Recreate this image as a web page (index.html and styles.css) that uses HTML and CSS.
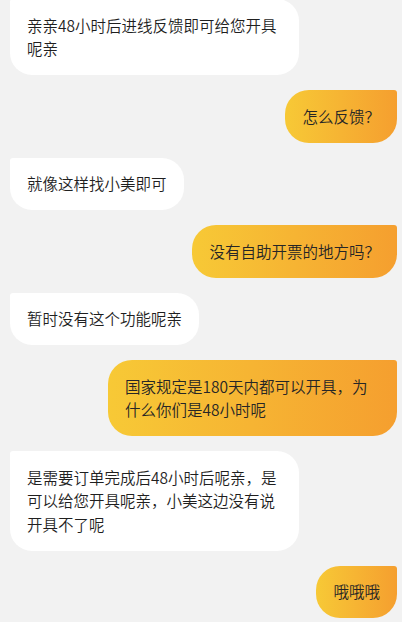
FILE: index.html
```html
<!DOCTYPE html>
<html lang="zh-CN">
<head>
<meta charset="utf-8">
<title>聊天</title>
<link rel="stylesheet" href="styles.css">
</head>
<body>
<div class="chat">
  <div class="msg in">亲亲48小时后进线反馈即可给您开具呢亲</div>
  <div class="msg out">怎么反馈？</div>
  <div class="msg in">就像这样找小美即可</div>
  <div class="msg out">没有自助开票的地方吗？</div>
  <div class="msg in">暂时没有这个功能呢亲</div>
  <div class="msg out">国家规定是180天内都可以开具，为什么你们是48小时呢</div>
  <div class="msg in">是需要订单完成后48小时后呢亲，是可以给您开具呢亲，小美这边没有说开具不了呢</div>
  <div class="msg out">哦哦哦</div>
</div>
</body>
</html>
```
FILE: styles.css
```css
html, body {
  margin: 0;
  padding: 0;
  background: #f2f2f2;
}
body {
  width: 402px;
  height: 622px;
  overflow: hidden;
  font-family: "Noto Sans CJK SC", "Noto Sans", sans-serif;
}
.chat {
  display: flex;
  flex-direction: column;
  gap: 15px;
  padding: 0 5px 0 10px;
  margin-top: -1px;
}
.msg {
  max-width: 289px;
  box-sizing: border-box;
  padding: 14.5px 17px;
  font-size: 15.5px;
  font-weight: 350;
  line-height: 23.5px;
  color: #1f1f1f;
  word-break: break-all;
}
.in {
  align-self: flex-start;
  background: #ffffff;
  border-radius: 3px 22px 22px 22px;
}
.out {
  align-self: flex-end;
  background: linear-gradient(90deg, #f7c936 0%, #f6b433 50%, #f59f2f 100%);
  border-radius: 24px 3px 24px 24px;
  color: #262626;
}
```
